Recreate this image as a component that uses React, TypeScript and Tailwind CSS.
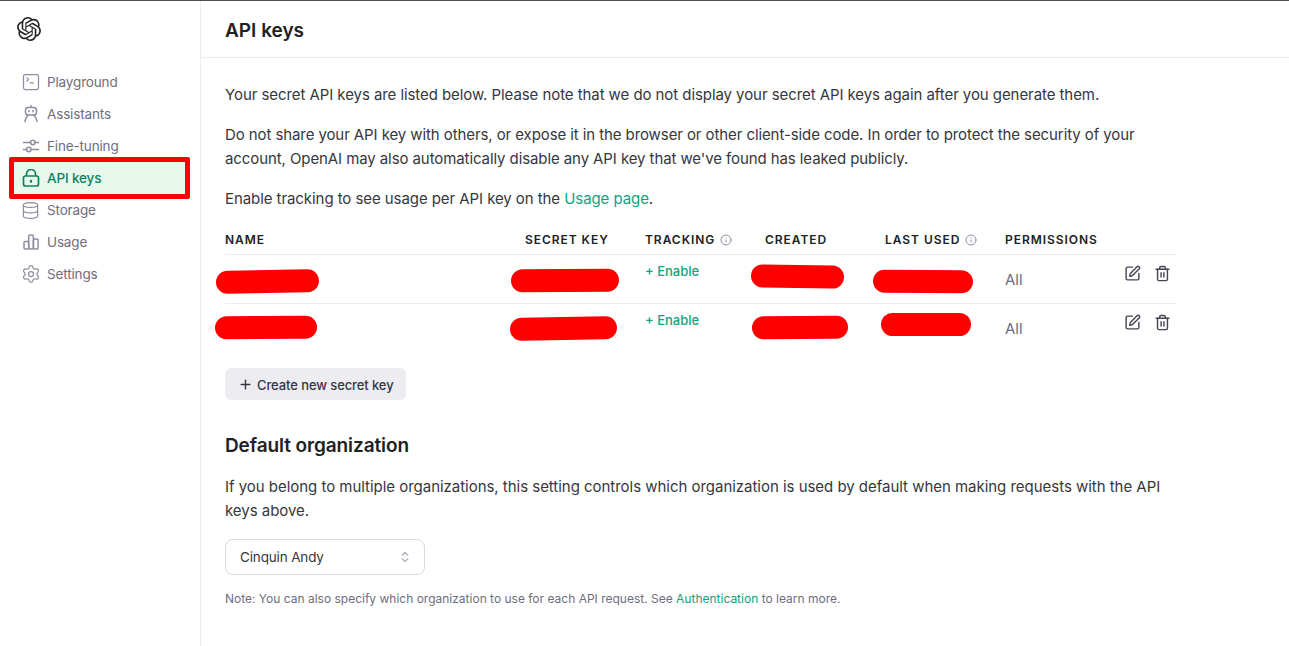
import { Database, Info, Plus, Settings, SquarePen, SquareTerminal, Trash2, ChevronsUpDown } from "lucide-react";
import { SiOpenai } from "react-icons/si";

const AssistantIcon = () => (
  <svg width="18" height="18" viewBox="0 0 18 18" fill="none" stroke="currentColor" strokeWidth="1.5" strokeLinecap="round">
    <rect x="3.500" y="2.500" width="11" height="7.500" rx="2.500" />
    <path d="M7 5.500v1.200M11 5.500v1.200" />
    <path d="M9 .8v1.500" />
    <path d="M3 16.800c.3-3.500 2.600-6.500 3.500-6.800M15 16.800c-.3-3.500-2.600-6.500-3.500-6.800" />
  </svg>
);

const TuningIcon = () => (
  <svg width="18" height="18" viewBox="0 0 18 18" fill="none" stroke="currentColor" strokeWidth="1.5" strokeLinecap="round">
    <path d="M1.500 5.500h7M13 5.500h3.500M1.500 12.500h3M9 12.500h7.500" />
    <circle cx="10.800" cy="5.500" r="2.200" />
    <circle cx="6.800" cy="12.500" r="2.200" />
  </svg>
);

const UsageIcon = () => (
  <svg width="18" height="18" viewBox="0 0 18 18" fill="none" stroke="currentColor" strokeWidth="1.500" strokeLinejoin="round">
    <rect x="2" y="8.500" width="4.700" height="7.500" rx="1" />
    <rect x="6.700" y="2" width="4.700" height="14" rx="1.500" />
    <rect x="11.400" y="6" width="4.700" height="10" rx="1" />
  </svg>
);

const LockIcon = () => (
  <svg width="18" height="18" viewBox="0 0 18 18" fill="none" stroke="currentColor" strokeWidth="1.700">
    <rect x="1.500" y="7" width="15" height="10" rx="2" />
    <path d="M4.500 7V5a4.500 4.500 0 0 1 9 0v2" />
    <circle cx="9" cy="12" r="1.200" fill="currentColor" stroke="none" />
    <path d="M9 12v2" strokeWidth="1.200" />
  </svg>
);

const navItems = [
  { label: "Playground", icon: <SquareTerminal size={20} strokeWidth={1.500} /> },
  { label: "Assistants", icon: <AssistantIcon /> },
  { label: "Fine-tuning", icon: <TuningIcon /> },
  { label: "API keys", icon: <LockIcon />, active: true },
  { label: "Storage", icon: <Database size={19} strokeWidth={1.500} /> },
  { label: "Usage", icon: <UsageIcon /> },
  { label: "Settings", icon: <Settings size={20} strokeWidth={1.500} /> },
];

const cols = "grid grid-cols-[300px_120px_120px_120px_120px_92px_80px]";

// red scribbles that hide the values in each row
const Scribble = ({ className }: { className: string }) => (
  <div className={`h-[23px] rounded-full bg-[#ff0000] ${className}`} />
);

const rows = [
  {
    name: "w-[103px] -ml-[9px] mt-[15px] -rotate-1",
    secret: "w-[108px] -ml-[14px] mt-[14px] -rotate-[0.5deg]",
    created: "w-[93px] -ml-[14px] mt-[10px] rotate-1",
    used: "w-[100px] -ml-[12px] mt-[15px] rotate-[0.5deg]",
  },
  {
    name: "w-[102px] -ml-[10px] mt-[12px] -rotate-[0.5deg]",
    secret: "w-[107px] -ml-[15px] mt-[13px] -rotate-1",
    created: "w-[96px] -ml-[13px] mt-[12px] -rotate-[0.5deg]",
    used: "w-[90px] -ml-[4px] mt-[9px]",
  },
];

const App = () => {
  return (
    <div className="flex h-[646px] border-t border-[#4d4d4f] font-['Inter',sans-serif] text-[#202123] overflow-hidden bg-white">
      {/* Sidebar */}
      <aside className="w-[201px] shrink-0 border-r border-[#ececf1]">
        <div className="pl-[17px] pt-[16px] h-[65px]">
          <SiOpenai size={24} className="text-[#202123]" />
        </div>
        <nav className="flex flex-col px-[14px]">
          {navItems.map((item) => (
            <div
              key={item.label}
              className={`flex items-center text-[13.5px] tracking-[-0.15px] ${
                item.active
                  ? "relative z-10 -mx-[5px] -my-[5px] h-[42px] w-[181px] rounded-[2px] border-[5px] border-[#ff0000] bg-[#e8f8ec] font-medium text-[#10825f]"
                  : "h-[32px] w-[171px] text-[#6e6e80]"
              }`}
            >
              <span
                className={`flex w-[33px] justify-center ${
                  item.active ? "text-[#10825f]" : "text-[#8e8ea0]"
                }`}
              >
                {item.icon}
              </span>
              {item.label}
            </div>
          ))}
        </nav>
      </aside>

      {/* Main */}
      <main className="flex-1 min-w-0">
        <div className="h-[57px] border-b border-[#ececf1] pl-[24px] pt-[16px]">
          <h1 className="text-[19px] leading-[27px] font-semibold">API keys</h1>
        </div>

        <div className="pl-[24px] pr-[112px] pt-[25px] text-[15px] leading-[24px] text-[#353740]">
          <p className="tracking-[-0.07px]">
            Your secret API keys are listed below. Please note that we do not display your secret API keys again after
            you generate them.
          </p>
          <p className="mt-[16px] tracking-[-0.09px]">
            Do not share your API key with others, or expose it in the browser or other client-side code. In order to
            protect the security of your account, OpenAI may also automatically disable any API key that we've found has
            leaked publicly.
          </p>
          <p className="mt-[16px] tracking-[-0.07px]">
            Enable tracking to see usage per API key on the <span className="text-[#10a37f]">Usage page</span>.
          </p>
        </div>

        {/* Keys table */}
        <div className="ml-[24px] mt-[16px] w-[952px]">
          <div className={`${cols} h-[27px] pb-[1px] items-center text-[12px] font-semibold tracking-[0.95px] text-[#202123]`}>
            <div>NAME</div>
            <div>SECRET KEY</div>
            <div className="flex items-center gap-[5px]">
              TRACKING <Info size={12} className="text-[#8e8ea0]" />
            </div>
            <div>CREATED</div>
            <div className="flex items-center gap-[5px]">
              LAST USED <Info size={12} className="text-[#8e8ea0]" />
            </div>
            <div className="whitespace-nowrap">PERMISSIONS</div>
            <div />
          </div>
          {rows.map((row, i) => (
            <div key={i} className={`${cols} h-[49px] border-t border-[#ececf1]`}>
              <div>
                <Scribble className={row.name} />
              </div>
              <div>
                <Scribble className={row.secret} />
              </div>
              <div className="pt-[6px] text-[13px] leading-[20px] font-medium text-[#10a37f]">+ Enable</div>
              <div>
                <Scribble className={row.created} />
              </div>
              <div>
                <Scribble className={row.used} />
              </div>
              <div className="pt-[13px] text-[15px] leading-[24px] text-[#6e6e80]">All</div>
              <div className="flex gap-[13px] pl-[27px] pt-[10px] text-[#444654]">
                <SquarePen size={17} strokeWidth={2} />
                <Trash2 size={17} strokeWidth={2} />
              </div>
            </div>
          ))}
        </div>

        <div className="pl-[24px] pr-[112px]">
          <button className="mt-[16px] flex h-[32px] w-[181px] items-center gap-[4px] rounded-[6px] bg-[#ececf1] pl-[13px] text-[13px] tracking-[-0.1px] font-medium text-[#353740]">
            <Plus size={15} strokeWidth={2.200} />
            <span className="pt-[3px]">Create new secret key</span>
          </button>

          <h2 className="mt-[34px] text-[19px] tracking-[-0.1px] leading-[24px] font-semibold">Default organization</h2>
          <p className="mt-[17px] text-[15px] tracking-[-0.03px] leading-[24px] text-[#353740]">
            If you belong to multiple organizations, this setting controls which organization is used by default when
            making requests with the API keys above.
          </p>
          <div className="mt-[16px] flex h-[36px] w-[200px] items-center justify-between rounded-[8px] border border-[#d9d9e3] pl-[14px] pr-[12px] text-[13.5px] tracking-[-0.15px] text-[#353740]">
            Cinquin Andy
            <ChevronsUpDown size={14} className="text-[#acacbe]" />
          </div>
          <p className="mt-[16px] text-[12px] leading-[16px] text-[#6e6e80]">
            Note: You can also specify which organization to use for each API request. See{" "}
            <span className="text-[#10a37f]">Authentication</span> to learn more.
          </p>
        </div>
      </main>
    </div>
  );
};

export default App;
